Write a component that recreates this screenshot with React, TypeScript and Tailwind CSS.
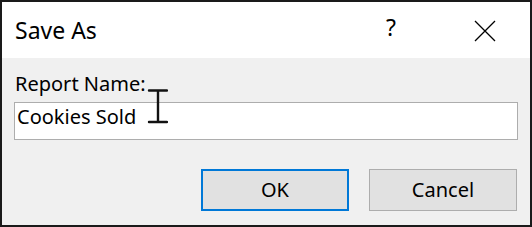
const App = () => {
    return (
        <div className="w-[532px] h-[227px] border-2 border-[#1a1a1a] bg-[#f0f0f0] flex flex-col text-black" style={{ fontFamily: '"Noto Sans", "Open Sans", sans-serif' }}>
            <div className="h-[56px] bg-white flex items-center relative">
                <span className="ml-[13px] text-[23px] leading-none">Save As</span>
                <span className="absolute left-[384px] top-[14px] text-[23px] leading-none">?</span>
                <svg className="absolute left-[472px] top-[18px]" width="22" height="22" viewBox="0 0 22 22">
                    <path d="M1 1 L21 21 M21 1 L1 21" stroke="#000" strokeWidth="1.3" fill="none" />
                </svg>
            </div>
            <div className="relative flex-1 flex flex-col px-[12px]">
                <div className="mt-[14px] text-[20px] leading-[24px] pl-[1px]">Report Name:</div>
                <div className="mt-[6px] h-[38px] bg-white border border-[#adadad] pl-[2px] pt-[1px] text-[20px] leading-[26px]">
                    Cookies Sold
                </div>
                <svg className="absolute left-[144px] top-[31px]" width="22" height="36" viewBox="0 0 22 36">
                    <path d="M3 1.5 H21 M12 1.5 V33 M3 33 H21" stroke="#111" strokeWidth="2.4" strokeLinecap="round" fill="none" />
                </svg>
                <div className="flex justify-end gap-[20px] mt-[29px] pr-[1px]">
                    <button className="w-[148px] h-[42px] bg-[#e1e1e1] border-2 border-[#0078d7] text-[20px]">OK</button>
                    <button className="w-[148px] h-[42px] bg-[#e1e1e1] border border-[#adadad] text-[20px]">Cancel</button>
                </div>
            </div>
        </div>
    );
};

export default App;
